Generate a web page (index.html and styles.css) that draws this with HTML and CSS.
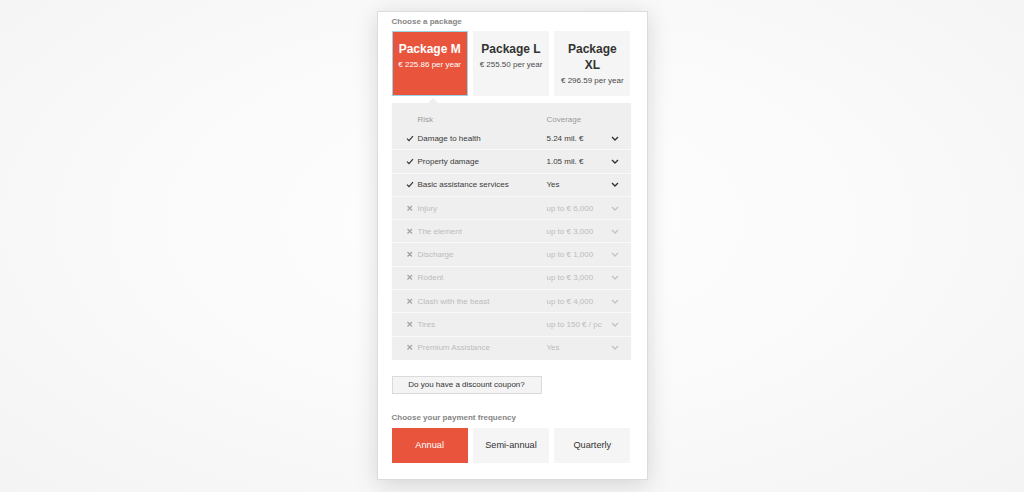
FILE: index.html
```html
<!DOCTYPE html>
<html lang="en">
<head>
    <meta charset="UTF-8">
    <meta name="viewport" content="width=device-width, initial-scale=1.0">
    <title>Choose a package</title>
    <link rel="stylesheet" href="styles.css">
</head>
<body>
    <div class="card">
        <div class="section-title">Choose a package</div>

        <div class="packages">
            <div class="package selected">
                <div class="package-name">Package M</div>
                <div class="package-price">€ 225.86 per year</div>
            </div>
            <div class="package">
                <div class="package-name">Package L</div>
                <div class="package-price">€ 255.50 per year</div>
            </div>
            <div class="package">
                <div class="package-name">Package XL</div>
                <div class="package-price">€ 296.59 per year</div>
            </div>
        </div>

        <div class="risks">
            <div class="risk-head">
                <span class="col-name">Risk</span>
                <span class="col-value">Coverage</span>
            </div>

            <div class="risk-row">
                <span class="col-icon"><svg width="8" height="7" viewBox="0 0 8 7"><path d="M1 3.6 L3 5.6 L7 1.2" fill="none" stroke="#333" stroke-width="1.2"/></svg></span>
                <span class="col-name">Damage to health</span>
                <span class="col-value">5.24 mil. €</span>
                <span class="col-arrow"><svg width="8" height="5" viewBox="0 0 8 5"><path d="M1 1 L4 4 L7 1" fill="none" stroke="#333" stroke-width="1.4"/></svg></span>
            </div>
            <div class="risk-row">
                <span class="col-icon"><svg width="8" height="7" viewBox="0 0 8 7"><path d="M1 3.6 L3 5.6 L7 1.2" fill="none" stroke="#333" stroke-width="1.2"/></svg></span>
                <span class="col-name">Property damage</span>
                <span class="col-value">1.05 mil. €</span>
                <span class="col-arrow"><svg width="8" height="5" viewBox="0 0 8 5"><path d="M1 1 L4 4 L7 1" fill="none" stroke="#333" stroke-width="1.4"/></svg></span>
            </div>
            <div class="risk-row">
                <span class="col-icon"><svg width="8" height="7" viewBox="0 0 8 7"><path d="M1 3.6 L3 5.6 L7 1.2" fill="none" stroke="#333" stroke-width="1.2"/></svg></span>
                <span class="col-name">Basic assistance services</span>
                <span class="col-value">Yes</span>
                <span class="col-arrow"><svg width="8" height="5" viewBox="0 0 8 5"><path d="M1 1 L4 4 L7 1" fill="none" stroke="#333" stroke-width="1.4"/></svg></span>
            </div>

            <div class="risk-row off">
                <span class="col-icon"><svg width="8" height="7" viewBox="0 0 8 7"><path d="M1.5 1 L6 5.5 M6 1 L1.5 5.5" fill="none" stroke="#a5a5a5" stroke-width="1.3"/></svg></span>
                <span class="col-name">Injury</span>
                <span class="col-value">up to € 6,000</span>
                <span class="col-arrow"><svg width="8" height="5" viewBox="0 0 8 5"><path d="M1 1 L4 4 L7 1" fill="none" stroke="#c2c2c2" stroke-width="1.3"/></svg></span>
            </div>
            <div class="risk-row off">
                <span class="col-icon"><svg width="8" height="7" viewBox="0 0 8 7"><path d="M1.5 1 L6 5.5 M6 1 L1.5 5.5" fill="none" stroke="#a5a5a5" stroke-width="1.3"/></svg></span>
                <span class="col-name">The element</span>
                <span class="col-value">up to € 3,000</span>
                <span class="col-arrow"><svg width="8" height="5" viewBox="0 0 8 5"><path d="M1 1 L4 4 L7 1" fill="none" stroke="#c2c2c2" stroke-width="1.3"/></svg></span>
            </div>
            <div class="risk-row off">
                <span class="col-icon"><svg width="8" height="7" viewBox="0 0 8 7"><path d="M1.5 1 L6 5.5 M6 1 L1.5 5.5" fill="none" stroke="#a5a5a5" stroke-width="1.3"/></svg></span>
                <span class="col-name">Discharge</span>
                <span class="col-value">up to € 1,000</span>
                <span class="col-arrow"><svg width="8" height="5" viewBox="0 0 8 5"><path d="M1 1 L4 4 L7 1" fill="none" stroke="#c2c2c2" stroke-width="1.3"/></svg></span>
            </div>
            <div class="risk-row off">
                <span class="col-icon"><svg width="8" height="7" viewBox="0 0 8 7"><path d="M1.5 1 L6 5.5 M6 1 L1.5 5.5" fill="none" stroke="#a5a5a5" stroke-width="1.3"/></svg></span>
                <span class="col-name">Rodent</span>
                <span class="col-value">up to € 3,000</span>
                <span class="col-arrow"><svg width="8" height="5" viewBox="0 0 8 5"><path d="M1 1 L4 4 L7 1" fill="none" stroke="#c2c2c2" stroke-width="1.3"/></svg></span>
            </div>
            <div class="risk-row off">
                <span class="col-icon"><svg width="8" height="7" viewBox="0 0 8 7"><path d="M1.5 1 L6 5.5 M6 1 L1.5 5.5" fill="none" stroke="#a5a5a5" stroke-width="1.3"/></svg></span>
                <span class="col-name">Clash with the beast</span>
                <span class="col-value">up to € 4,000</span>
                <span class="col-arrow"><svg width="8" height="5" viewBox="0 0 8 5"><path d="M1 1 L4 4 L7 1" fill="none" stroke="#c2c2c2" stroke-width="1.3"/></svg></span>
            </div>
            <div class="risk-row off">
                <span class="col-icon"><svg width="8" height="7" viewBox="0 0 8 7"><path d="M1.5 1 L6 5.5 M6 1 L1.5 5.5" fill="none" stroke="#a5a5a5" stroke-width="1.3"/></svg></span>
                <span class="col-name">Tires</span>
                <span class="col-value">up to 150 € / pc</span>
                <span class="col-arrow"><svg width="8" height="5" viewBox="0 0 8 5"><path d="M1 1 L4 4 L7 1" fill="none" stroke="#c2c2c2" stroke-width="1.3"/></svg></span>
            </div>
            <div class="risk-row off">
                <span class="col-icon"><svg width="8" height="7" viewBox="0 0 8 7"><path d="M1.5 1 L6 5.5 M6 1 L1.5 5.5" fill="none" stroke="#a5a5a5" stroke-width="1.3"/></svg></span>
                <span class="col-name">Premium Assistance</span>
                <span class="col-value">Yes</span>
                <span class="col-arrow"><svg width="8" height="5" viewBox="0 0 8 5"><path d="M1 1 L4 4 L7 1" fill="none" stroke="#c2c2c2" stroke-width="1.3"/></svg></span>
            </div>
        </div>

        <button class="coupon" type="button">Do you have a discount coupon?</button>

        <div class="section-title payment-title">Choose your payment frequency</div>

        <div class="frequencies">
            <button class="frequency selected" type="button">Annual</button>
            <button class="frequency" type="button">Semi-annual</button>
            <button class="frequency" type="button">Quarterly</button>
        </div>
    </div>
</body>
</html>
```

FILE: styles.css
```css
body {
    font-family: 'Liberation Sans', Arial, sans-serif;
    background-color: #f6f6f6;
    background-image: radial-gradient(ellipse at 50% 45%, #ffffff 0%, #fbfbfb 40%, #f4f4f4 100%);
    margin: 0;
    height: 492px;
    overflow: hidden;
    display: flex;
    justify-content: center;
    align-items: flex-start;
}

.card {
    background: #fff;
    border: 1px solid #dcdcdc;
    box-shadow: 0 4px 22px rgba(0,0,0,0.15);
    margin-top: 11px;
    width: 239px;
    padding: 4px 16px 16px 14px;
}

.section-title {
    font-size: 8px;
    line-height: 12px;
    font-weight: bold;
    color: #858585;
    margin-bottom: 3px;
}

.packages {
    display: flex;
    gap: 5px;
}

.package {
    flex: 1;
    background: #f5f5f5;
    border: 1px solid transparent;
    padding: 9px 5px 8px 5px;
    text-align: center;
    color: #333;
}

.package.selected {
    background: #e9553c;
    border-color: #9bd3e8;
    color: #fff;
}

.package-name {
    font-size: 12px;
    line-height: 16px;
    font-weight: bold;
}

.package-price {
    font-size: 8px;
    line-height: 12px;
    margin-top: 2px;
    white-space: nowrap;
    color: #4a4a4a;
}

.package.selected .package-price {
    color: #fff;
}

.risks {
    position: relative;
    margin-top: 7px;
    background: #efefef;
    box-shadow: 0 1px 1px rgba(0,0,0,0.06);
    font-size: 8px;
}

/* small arrow pointing at the selected package */
.risks::before {
    content: '';
    position: absolute;
    top: -5px;
    left: 36px;
    border-left: 5px solid transparent;
    border-right: 5px solid transparent;
    border-bottom: 5px solid #efefef;
}

.risk-head,
.risk-row {
    display: flex;
    align-items: center;
    padding-left: 14px;
    padding-right: 12px;
}

.risk-head {
    height: 24px;
    box-sizing: border-box;
    padding-top: 9px;
    line-height: 12px;
    color: #9a9a9a;
}

.risk-head .col-name {
    margin-left: 12px;
}

.risk-row {
    height: 22.3px;
    border-bottom: 1px solid #fafafa;
    color: #3a3a3a;
}

.risk-row:last-child {
    border-bottom: none;
}

.risk-row.off {
    color: #bcbcbc;
}

.col-icon {
    width: 12px;
    display: flex;
    align-items: center;
}

.col-name {
    width: 129px;
}

.col-value {
    flex: 1;
    white-space: nowrap;
}

.col-arrow {
    width: 8px;
    display: flex;
    align-items: center;
}

.coupon {
    display: block;
    margin-top: 17px;
    width: 150px;
    height: 18px;
    padding: 0;
    background: #f4f4f4;
    border: 1px solid #dadada;
    font-family: inherit;
    font-size: 8px;
    color: #333;
    cursor: pointer;
}

.payment-title {
    margin-top: 18px;
    margin-bottom: 4px;
}

.frequencies {
    display: flex;
    gap: 5px;
}

.frequency {
    flex: 1;
    height: 35px;
    padding: 0;
    border: none;
    background: #f5f5f5;
    font-family: inherit;
    font-size: 9.2px;
    color: #333;
    cursor: pointer;
}

.frequency.selected {
    background: #e9553c;
    color: #fff;
}
```
